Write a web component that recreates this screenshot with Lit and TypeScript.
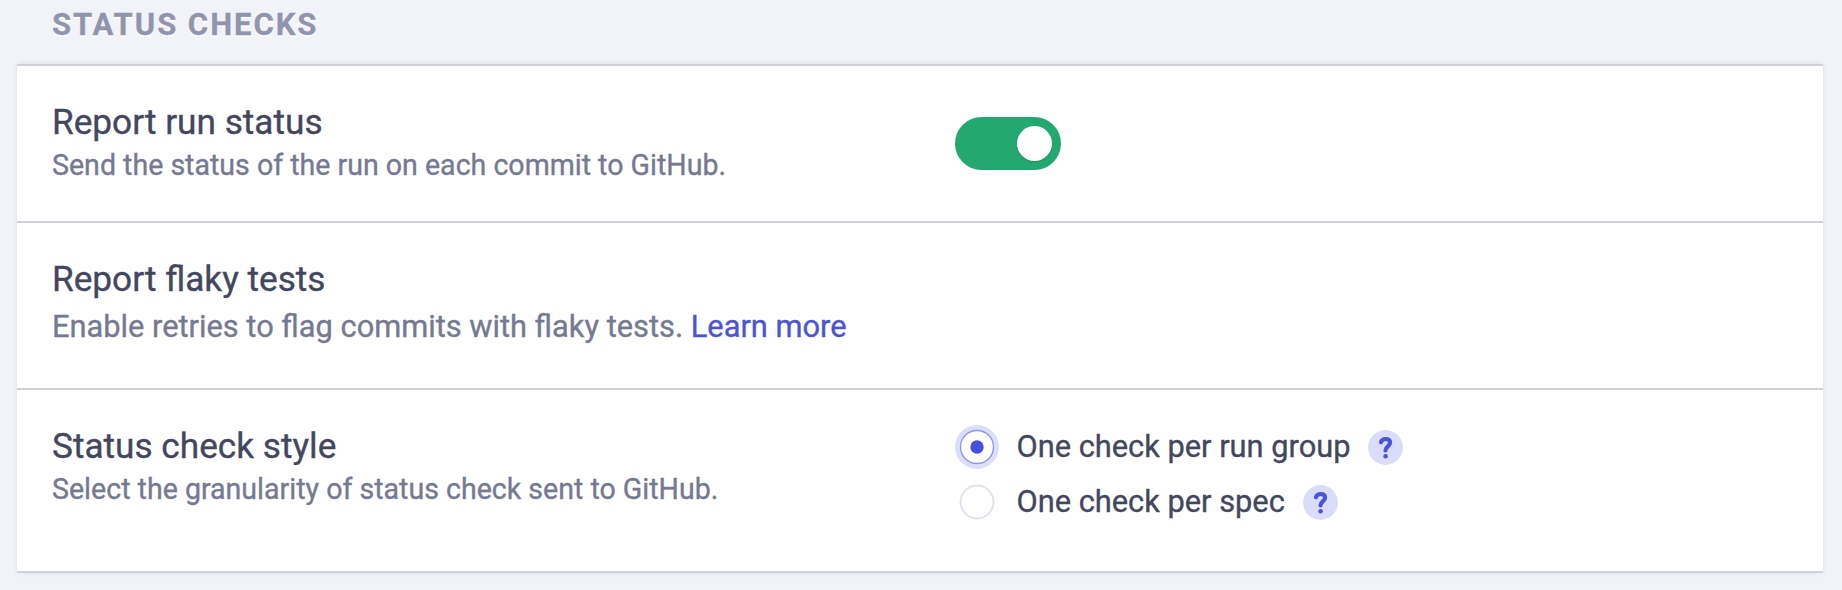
import { LitElement, html, css, svg } from "lit";
import { customElement, property, state } from "lit/decorators.js";

@customElement("help-badge")
class HelpBadge extends LitElement {
  static styles = css`
    :host { display: block; width: 35px; height: 35px; }
    svg { display: block; }
  `;
  render() {
    return html`<svg width="35" height="35" viewBox="0 0 35 35">
      <circle cx="17.5" cy="17.5" r="17.4" fill="#dadcfb" />
      <path d="M13 12.2 C13.7 10 15.4 9 17.6 9 C20.4 9 22.1 10.5 22.1 12.8 C22.1 16.2 17.5 16.7 17.5 20.4" fill="none" stroke="#4a55d8" stroke-width="4.2" stroke-linecap="round" stroke-linejoin="round" />
      <circle cx="17.6" cy="26.2" r="2.3" fill="#4a55d8" />
    </svg>`;
  }
}

@customElement("toggle-switch")
class ToggleSwitch extends LitElement {
  @property({ type: Boolean }) on = false;
  static styles = css`
    :host { display: block; }
    .track {
      display: flex; align-items: center; box-sizing: border-box;
      width: 106px; height: 53px; padding: 0 9px; border-radius: 27px; background: #b4b7c9;
    }
    .track.on { justify-content: flex-end; background: #23a870; }
    .knob { width: 35px; height: 35px; border-radius: 50%; background: #fff; box-shadow: 0 1px 2px rgba(0, 60, 30, 0.2); }
  `;
  render() {
    return html`<div class="track ${this.on ? "on" : ""}" role="switch" aria-checked=${this.on}>
      <div class="knob"></div>
    </div>`;
  }
}

@customElement("radio-option")
class RadioOption extends LitElement {
  @property() label = "";
  @property({ type: Boolean }) checked = false;
  static styles = css`
    :host { display: flex; align-items: center; height: 55px; }
    svg { display: block; width: 44px; height: 44px; margin-right: 17.5px; flex: none; }
    .label {
      font-size: 30.8px; line-height: 40px; color: #43475d; margin-right: 18px;
      white-space: nowrap; -webkit-text-stroke: 0.35px currentColor;
    }
    help-badge { margin-top: 1px; }
  `;
  render() {
    return html`
      <svg viewBox="0 0 44 44">
        ${this.checked
          ? svg`<circle cx="22" cy="22" r="22" fill="#dcdefb" />
              <circle cx="22" cy="22" r="16.5" fill="#fff" stroke="#8f97ee" stroke-width="1.4" />
              <circle cx="22" cy="22" r="6.7" fill="#4650da" />`
          : svg`<circle cx="22" cy="22" r="16.5" fill="#fff" stroke="#e2e2ec" stroke-width="2" />`}
      </svg>
      <span class="label">${this.label}</span>
      <help-badge></help-badge>
    `;
  }
}

@customElement("app-root")
class AppRoot extends LitElement {
  @state() options = ["One check per run group", "One check per spec"];
  @state() selected = 0;

  static styles = css`
    :host {
      display: block; box-sizing: border-box; height: 590px; overflow: hidden;
      background: #f2f3f9; padding: 0 19px 0 17px; font-family: Roboto, sans-serif;
    }
    .heading {
      margin: 0; height: 64px; padding: 5px 0 0 35px; box-sizing: border-box;
      font-size: 31px; line-height: 40px; font-weight: 700; letter-spacing: 1.97px;
      color: #9095ad; text-shadow: 0 2px 0 #fff; -webkit-text-stroke: 0.3px currentColor;
    }
    .panel { border-top: 2px solid #cfd1d8; background: #fff; box-shadow: 0 0 5px rgba(60, 65, 110, 0.12); }
    .row {
      display: grid; grid-template-columns: 903px 1fr; box-sizing: border-box;
      border-bottom: 2px solid #cfd1d8; padding: 34px 0 0 35px;
    }
    .status { height: 157px; }
    .flaky { height: 167px; }
    .style { height: 183px; }
    .title { font-size: 35.2px; line-height: 44px; color: #43475d; -webkit-text-stroke: 0.35px currentColor; }
    .desc { margin-top: 4px; font-size: 28.57px; line-height: 34px; color: #757991; -webkit-text-stroke: 0.35px currentColor; }
    .desc.large { margin-top: 6px; font-size: 30.8px; line-height: 40px; }
    .link { color: #4a54d4; text-decoration: none; }
    .switch { padding-top: 17px; }
    .options { margin-top: -5px; }
  `;

  render() {
    return html`
      <h2 class="heading">STATUS CHECKS</h2>
      <div class="panel">
        <div class="row status">
          <div>
            <div class="title">Report run status</div>
            <div class="desc">Send the status of the run on each commit to GitHub.</div>
          </div>
          <toggle-switch class="switch" on></toggle-switch>
        </div>
        <div class="row flaky">
          <div>
            <div class="title">Report flaky tests</div>
            <div class="desc large">Enable retries to flag commits with flaky tests. <a class="link">Learn more</a></div>
          </div>
        </div>
        <div class="row style">
          <div>
            <div class="title">Status check style</div>
            <div class="desc">Select the granularity of status check sent to GitHub.</div>
          </div>
          <div class="options">
            ${this.options.map((o, i) => html`<radio-option .label=${o} .checked=${i === this.selected}></radio-option>`)}
          </div>
        </div>
      </div>
    `;
  }
}
